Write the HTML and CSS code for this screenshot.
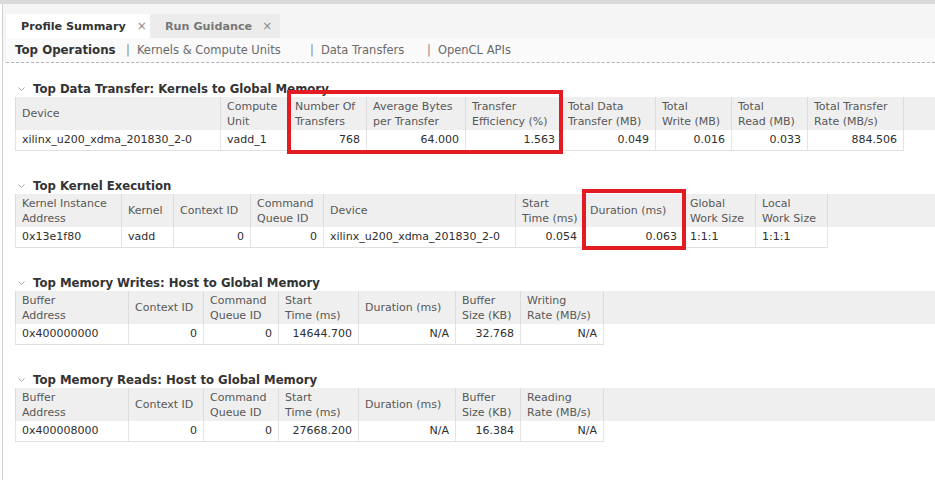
FILE: index.html
```html
<!DOCTYPE html>
<html>
<head>
<meta charset="utf-8">
<link rel="stylesheet" href="styles.css">
</head>
<body>
<div class="topbar"></div>
<div class="frame">
  <div class="header">
    <div class="tabbar">
      <div class="tab tab-active">Profile Summary<span class="close">×</span></div>
      <div class="tab tab-inactive">Run Guidance<span class="close">×</span></div>
    </div>
    <div class="subtabs">
      <span class="sub sub-1 sub-active">Top Operations</span>
      <span class="sub sub-2"><span class="sep">|</span>Kernels &amp; Compute Units</span>
      <span class="sub sub-3"><span class="sep">|</span>Data Transfers</span>
      <span class="sub sub-4"><span class="sep">|</span>OpenCL APIs</span>
    </div>
  </div>

  <div class="content">
    <section class="section">
      <h2 class="heading"><svg class="chev" width="7" height="5" viewBox="0 0 7 5"><polyline points="0.5,0.5 3.5,3.5 6.5,0.5" fill="none" stroke="#a8a8a8" stroke-width="1"/></svg>Top Data Transfer: Kernels to Global Memory</h2>
      <div class="table-wrap">
        <table class="grid">
          <colgroup>
            <col class="w205"><col class="w68"><col class="w78"><col class="w99"><col class="w96"><col class="w94"><col class="w76"><col class="w76"><col class="w96"><col>
          </colgroup>
          <thead>
            <tr>
              <th>Device</th><th>Compute<br>Unit</th><th>Number Of<br>Transfers</th><th>Average Bytes<br>per Transfer</th><th>Transfer<br>Efficiency (%)</th><th>Total Data<br>Transfer (MB)</th><th>Total<br>Write (MB)</th><th>Total<br>Read (MB)</th><th>Total Transfer<br>Rate (MB/s)</th><th class="fill"></th>
            </tr>
          </thead>
          <tbody>
            <tr>
              <td>xilinx_u200_xdma_201830_2-0</td><td>vadd_1</td><td class="num">768</td><td class="num">64.000</td><td class="num">1.563</td><td class="num">0.049</td><td class="num">0.016</td><td class="num">0.033</td><td class="num">884.506</td><td class="fill"></td>
            </tr>
          </tbody>
        </table>
        <div class="mark mark-1"></div>
      </div>
    </section>

    <section class="section">
      <h2 class="heading"><svg class="chev" width="7" height="5" viewBox="0 0 7 5"><polyline points="0.5,0.5 3.5,3.5 6.5,0.5" fill="none" stroke="#a8a8a8" stroke-width="1"/></svg>Top Kernel Execution</h2>
      <div class="table-wrap">
        <table class="grid">
          <colgroup>
            <col class="w106"><col class="w52"><col class="w77"><col class="w73"><col class="w192"><col class="w68"><col class="w100"><col class="w72"><col class="w72"><col>
          </colgroup>
          <thead>
            <tr>
              <th>Kernel Instance<br>Address</th><th>Kernel</th><th>Context ID</th><th>Command<br>Queue ID</th><th>Device</th><th>Start<br>Time (ms)</th><th>Duration (ms)</th><th>Global<br>Work Size</th><th>Local<br>Work Size</th><th class="fill"></th>
            </tr>
          </thead>
          <tbody>
            <tr>
              <td>0x13e1f80</td><td>vadd</td><td class="num">0</td><td class="num">0</td><td>xilinx_u200_xdma_201830_2-0</td><td class="num">0.054</td><td class="num">0.063</td><td>1:1:1</td><td>1:1:1</td><td class="fill"></td>
            </tr>
          </tbody>
        </table>
        <div class="mark mark-2"></div>
      </div>
    </section>

    <section class="section">
      <h2 class="heading"><svg class="chev" width="7" height="5" viewBox="0 0 7 5"><polyline points="0.5,0.5 3.5,3.5 6.5,0.5" fill="none" stroke="#a8a8a8" stroke-width="1"/></svg>Top Memory Writes: Host to Global Memory</h2>
      <div class="table-wrap">
        <table class="grid">
          <colgroup>
            <col class="w113"><col class="w75"><col class="w75"><col class="w80"><col class="w97"><col class="w65"><col class="w83"><col>
          </colgroup>
          <thead>
            <tr>
              <th>Buffer<br>Address</th><th>Context ID</th><th>Command<br>Queue ID</th><th>Start<br>Time (ms)</th><th>Duration (ms)</th><th>Buffer<br>Size (KB)</th><th>Writing<br>Rate (MB/s)</th><th class="fill"></th>
            </tr>
          </thead>
          <tbody>
            <tr>
              <td>0x400000000</td><td class="num">0</td><td class="num">0</td><td class="num">14644.700</td><td class="num">N/A</td><td class="num">32.768</td><td class="num">N/A</td><td class="fill"></td>
            </tr>
          </tbody>
        </table>
      </div>
    </section>

    <section class="section">
      <h2 class="heading"><svg class="chev" width="7" height="5" viewBox="0 0 7 5"><polyline points="0.5,0.5 3.5,3.5 6.5,0.5" fill="none" stroke="#a8a8a8" stroke-width="1"/></svg>Top Memory Reads: Host to Global Memory</h2>
      <div class="table-wrap">
        <table class="grid">
          <colgroup>
            <col class="w113"><col class="w75"><col class="w75"><col class="w80"><col class="w97"><col class="w65"><col class="w83"><col>
          </colgroup>
          <thead>
            <tr>
              <th>Buffer<br>Address</th><th>Context ID</th><th>Command<br>Queue ID</th><th>Start<br>Time (ms)</th><th>Duration (ms)</th><th>Buffer<br>Size (KB)</th><th>Reading<br>Rate (MB/s)</th><th class="fill"></th>
            </tr>
          </thead>
          <tbody>
            <tr>
              <td>0x400008000</td><td class="num">0</td><td class="num">0</td><td class="num">27668.200</td><td class="num">N/A</td><td class="num">16.384</td><td class="num">N/A</td><td class="fill"></td>
            </tr>
          </tbody>
        </table>
      </div>
    </section>
  </div>
</div>
</body>
</html>
```

FILE: styles.css
```css
html, body {
  margin: 0;
  padding: 0;
}
body {
  width: 935px;
  height: 480px;
  overflow: hidden;
  background: #ffffff;
  font-family: "DejaVu Sans", "Noto Sans", sans-serif;
  color: #333;
}
.topbar {
  height: 4px;
  background: #d9d9d9;
}
.frame {
  margin-left: 2px;
  border-left: 1px solid #d0d0d0;
  height: 476px;
  background: #fff;
}
.header {
  background: #f5f5f5;
  padding-left: 3px;
  padding-top: 10px;
}
.tabbar {
  display: flex;
  height: 24px;
}
.tab {
  display: flex;
  align-items: center;
  box-sizing: border-box;
  height: 24px;
  padding-left: 15px;
  font-size: 11.2px;
  font-weight: bold;
  white-space: nowrap;
}
.tab-active {
  width: 144px;
  background: #ffffff;
  color: #333;
}
.tab-inactive {
  width: 130px;
  background: #ececec;
  color: #787878;
}
.close {
  font-weight: normal;
  font-size: 12px;
  color: #8a8a8a;
  margin-left: 11px;
}
.tab-inactive .close {
  margin-left: 10px;
}
.subtabs {
  display: flex;
  align-items: center;
  height: 24px;
  background: #fafafa;
  border-bottom: 1px dashed #b4b4b4;
  font-size: 11.5px;
  color: #6a6a6a;
}
.sub {
  white-space: nowrap;
}
.sub-1 { width: 111px; padding-left: 9px; box-sizing: content-box; }
.sub-2 { width: 184px; }
.sub-3 { width: 117px; }
.sub-active {
  font-weight: bold;
  font-size: 11.8px;
  color: #333;
}
.sep {
  color: #888;
  margin-right: 7px;
}
.content {
  padding: 19px 0 0 12px;
}
.section {
  margin-bottom: 28.5px;
}
.heading {
  margin: 0;
  height: 15px;
  line-height: 15px;
  font-size: 11.7px;
  font-weight: bold;
  color: #333;
  display: flex;
  align-items: center;
  white-space: nowrap;
}
.chev {
  margin-left: 3px;
  margin-right: 8px;
  flex: none;
}
.table-wrap {
  position: relative;
}
.grid {
  table-layout: fixed;
  border-collapse: collapse;
  width: 920px;
  font-size: 11px;
}
.grid th {
  height: 33px;
  box-sizing: border-box;
  padding: 1px 6px;
  background: #efefef;
  color: #585858;
  font-weight: normal;
  text-align: left;
  vertical-align: middle;
  line-height: 15px;
  border-left: 1px solid #dcdcdc;
  white-space: nowrap;
  overflow: hidden;
}
.grid td {
  height: 20px;
  box-sizing: border-box;
  padding: 0 6px;
  color: #2e2e2e;
  text-align: left;
  vertical-align: middle;
  border-left: 1px solid #e4e4e4;
  border-bottom: 1px solid #e0e0e0;
  white-space: nowrap;
  overflow: hidden;
}
.grid td.num {
  text-align: right;
}
.grid th.fill {
  padding: 0;
}
.grid td.fill {
  padding: 0;
  border-bottom: none;
  background: #fff;
}
.w52 { width: 52px; }
.w65 { width: 65px; }
.w68 { width: 68px; }
.w72 { width: 72px; }
.w73 { width: 73px; }
.w75 { width: 75px; }
.w76 { width: 76px; }
.w77 { width: 77px; }
.w78 { width: 78px; }
.w80 { width: 80px; }
.w83 { width: 83px; }
.w94 { width: 94px; }
.w96 { width: 96px; }
.w97 { width: 97px; }
.w99 { width: 99px; }
.w100 { width: 100px; }
.w106 { width: 106px; }
.w113 { width: 113px; }
.w192 { width: 192px; }
.w205 { width: 205px; }
.mark {
  position: absolute;
  box-sizing: border-box;
  border: 4px solid #e31b23;
}
.mark-1 {
  left: 272px;
  top: -7px;
  width: 276px;
  height: 64px;
}
.mark-2 {
  left: 567px;
  top: -5px;
  width: 104px;
  height: 61px;
}
```
